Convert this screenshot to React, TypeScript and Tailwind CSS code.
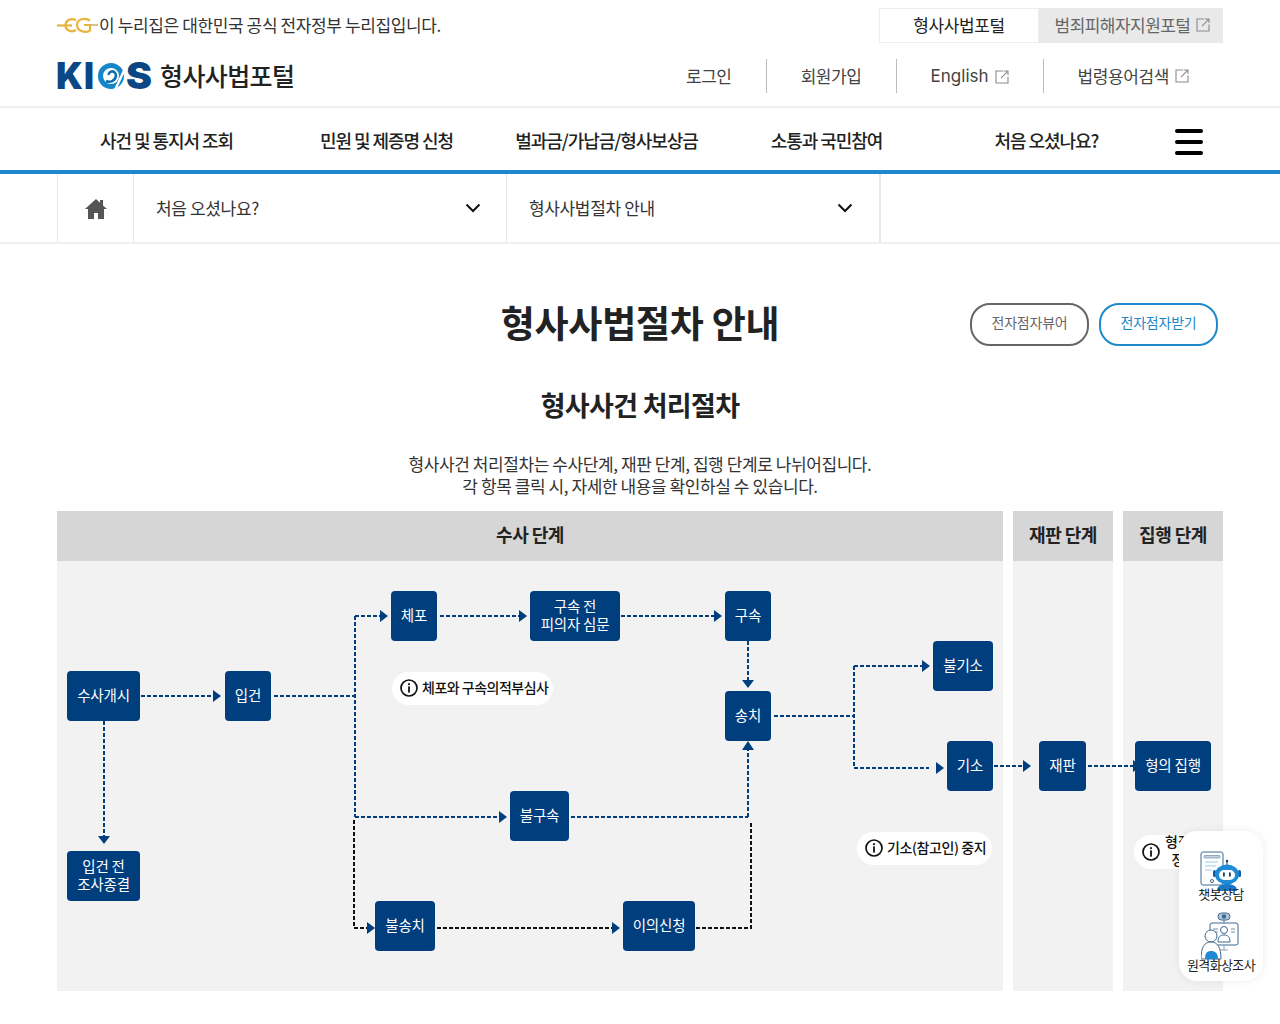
import React from "react";

const font = { fontFamily: '"Noto Sans CJK KR", "Noto Sans", sans-serif' };

function ExtIcon({ className = "" }: { className?: string }) {
  return (
    <svg width="14" height="14" viewBox="0 0 14 14" fill="none" className={className} stroke="#8a8a8a" strokeWidth="1.1">
      <path d="M8 1H1v12h12V6.5" />
      <path d="M6 8.2L12.6 1.4M8.8 1h4.2v4" />
    </svg>
  );
}

function Chevron() {
  return (
    <svg width="16" height="10" viewBox="0 0 16 10" fill="none" stroke="#111" strokeWidth="2">
      <path d="M1.5 1.5L8 8l6.5-6.5" />
    </svg>
  );
}

function InfoIcon({ size = 18 }: { size?: number }) {
  return (
    <svg width={size} height={size} viewBox="0 0 18 18" fill="none" className="shrink-0">
      <circle cx="9" cy="9" r="8" stroke="#111" strokeWidth="1.7" />
      <rect x="8.1" y="7.4" width="1.8" height="6.2" fill="#111" />
      <rect x="8.1" y="4.2" width="1.8" height="1.9" fill="#111" />
    </svg>
  );
}

function Logo() {
  return (
    <svg width="96" height="30" viewBox="0 0 96 30" className="shrink-0 overflow-visible">
      <text x="-1" y="28" fontFamily="Inter, sans-serif" fontWeight="900" fontSize="37" fill="#0a4784" textLength="27" lengthAdjust="spacingAndGlyphs">K</text>
      <text x="27" y="28" fontFamily="Inter, sans-serif" fontWeight="900" fontSize="37" fill="#0a4784" textLength="10" lengthAdjust="spacingAndGlyphs">I</text>
      <circle cx="54" cy="15" r="10.500" fill="none" stroke="#1487c9" strokeWidth="5" />
      <path d="M49 20c4 2 9 0 10-5 0-3-2-5-4.500-4.500-2 .5-3 2-2.500 3.500" fill="none" stroke="#0f6db4" strokeWidth="2.600" />
      <path d="M58 29L71 1" stroke="#fff" strokeWidth="2.500" />
      <text x="69" y="28" fontFamily="Inter, sans-serif" fontWeight="900" fontSize="37" fill="#0a4784" textLength="26" lengthAdjust="spacingAndGlyphs">S</text>
    </svg>
  );
}

function EGov() {
  return (
    <svg width="41" height="16" viewBox="0 0 41 16" fill="none" stroke="#e8b43c" strokeWidth="2.2" className="shrink-0">
      <path d="M0 8.500h15" />
      <path d="M19 3.200C14 .8 9 3 8.500 8s6 8 10.500 5" />
      <path d="M33 3.500C28 .2 20 2 20 8s8 8.500 13 5.500V8h-6" />
      <path d="M33 8h8" strokeWidth="1.400" stroke="#c9a862" />
    </svg>
  );
}

function RobotIcon() {
  return (
    <svg width="42" height="40" viewBox="0 0 42 40" fill="none">
      <rect x="1" y="1" width="22" height="33" rx="2" fill="#fff" stroke="#3d6a92" strokeWidth="1" />
      <rect x="4" y="4.500" width="16" height="2.500" rx="1" fill="#c3d3e0" stroke="#3d6a92" strokeWidth=".5" />
      <path d="M5 11h13M5 15h11M5 19h7" stroke="#8fd0e4" strokeWidth="1.200" />
      <circle cx="12" cy="30" r="1.500" stroke="#3d6a92" />
      <circle cx="27" cy="10" r="1.200" fill="#0d3f73" />
      <path d="M27 11v5" stroke="#0d3f73" />
      <path d="M17 40c0-5 4-7 10-7s10 2 10 7z" fill="#1878c4" />
      <rect x="13" y="19" width="3" height="7" rx="1.500" fill="#0d5fa5" />
      <rect x="38" y="19" width="3" height="7" rx="1.500" fill="#0d5fa5" />
      <ellipse cx="27" cy="23.500" rx="12" ry="10" fill="#1f8ad6" />
      <rect x="19" y="19" width="16" height="10" rx="5" fill="#fff" />
      <rect x="23" y="21.500" width="1.800" height="4" fill="#0d3f73" />
      <rect x="29" y="21.500" width="1.800" height="4" fill="#0d3f73" />
    </svg>
  );
}

function VideoIcon() {
  return (
    <svg width="40" height="48" viewBox="0 0 40 48" fill="none">
      <rect x="17" y="1" width="12" height="7" rx="3.500" fill="#b8c8d6" stroke="#3d6a92" />
      <circle cx="23" cy="4.500" r="2.200" fill="#3d6a92" />
      <path d="M23 8v3" stroke="#3d6a92" />
      <rect x="9" y="11" width="28" height="22" rx="2" fill="#fff" stroke="#3d6a92" />
      <circle cx="23" cy="18" r="3.500" fill="#fff" stroke="#3d6a92" />
      <path d="M17 30c0-5 2-7 6-7s6 2 6 7z" fill="#fff" stroke="#3d6a92" />
      <path d="M12 17h5M12 20h5M30 17h4M30 20h4" stroke="#6c8ba5" />
      <path d="M23 33v5M19 38h8" stroke="#8aa0b3" />
      <circle cx="10" cy="24" r="6" fill="#fff" stroke="#3d6a92" />
      <path d="M0 47c0-11 3-17 10-17s10 6 10 17z" fill="#fff" stroke="#3d6a92" />
      <path d="M4 47c0-6 2-8 6-8s7 2 7 8z" fill="#1f8ad6" />
    </svg>
  );
}

/* Flow-chart: nodes sit on a free canvas whose origin is the diagram's top-left (57,511 on the page). */
type Node = { t: string[]; x: number; y: number; w: number };
const nodes: Node[] = [
  { t: ["수사개시"], x: 10, y: 160, w: 73 },
  { t: ["입건"], x: 168, y: 160, w: 46 },
  { t: ["체포"], x: 334, y: 80, w: 46 },
  { t: ["구속 전", "피의자 심문"], x: 473, y: 80, w: 90 },
  { t: ["구속"], x: 668, y: 80, w: 46 },
  { t: ["송치"], x: 668, y: 180, w: 46 },
  { t: ["불기소"], x: 876, y: 130, w: 60 },
  { t: ["기소"], x: 890, y: 230, w: 46 },
  { t: ["재판"], x: 982, y: 230, w: 47 },
  { t: ["형의 집행"], x: 1078, y: 230, w: 76 },
  { t: ["입건 전", "조사종결"], x: 10, y: 340, w: 73 },
  { t: ["불구속"], x: 453, y: 280, w: 59 },
  { t: ["불송치"], x: 318, y: 390, w: 60 },
  { t: ["이의신청"], x: 566, y: 390, w: 72 },
];

const blue = "#003e7e";

function Connectors() {
  const ox = 57;
  const oy = 511;
  const blueLines = [
    "M141 696H214",
    "M274 696H355",
    "M355 616V817",
    "M355 616H381",
    "M440 616H520",
    "M621 616H715",
    "M748 641V681",
    "M774 716H854",
    "M854 666V768",
    "M854 666H923",
    "M854 768H929",
    "M994 766H1024",
    "M1088 766H1136",
    "M104 721V836",
    "M355 817H499",
    "M571 817H748",
    "M748 817V749",
  ];
  const blackLines = ["M354 820V928H367", "M437 928H613", "M696 928H751V823"];
  const right = [
    [221, 696], [388, 616], [527, 616], [722, 616], [930, 666], [944, 768], [1031, 766], [1141, 766], [507, 817], [375, 928], [620, 928],
  ];
  const down = [[748, 688], [104, 844]];
  const up = [[748, 741]];
  return (
    <svg width="1166" height="480" viewBox={`${ox} ${oy} 1166 480`} fill="none" className="absolute left-0 top-0">
      {blueLines.map((d) => (
        <path key={d} d={d} stroke={blue} strokeWidth="2" strokeDasharray="4 2" />
      ))}
      {blackLines.map((d) => (
        <path key={d} d={d} stroke="#111" strokeWidth="2" strokeDasharray="4 2" />
      ))}
      {right.map(([x, y]) => (
        <path key={`${x}${y}`} d={`M${x} ${y}l-8-6v12z`} fill={blue} />
      ))}
      {down.map(([x, y]) => (
        <path key={`${x}${y}`} d={`M${x} ${y}l-6-8h12z`} fill={blue} />
      ))}
      {up.map(([x, y]) => (
        <path key={`${x}${y}`} d={`M${x} ${y}l-6 9h12z`} fill={blue} />
      ))}
    </svg>
  );
}

function Panel({ title, className }: { title: string; className: string }) {
  return (
    <div className={`flex flex-col bg-[#f2f2f2] ${className}`}>
      <div className="flex h-[50px] items-center justify-center bg-[#d6d6d6] pb-[3px] text-[18px] font-bold tracking-[-0.5px] text-[#222]">{title}</div>
    </div>
  );
}

export default function App() {
  return (
    <div className="relative h-[1024px] w-[1280px] overflow-hidden bg-white text-[#222]" style={font}>
      {/* top bar */}
      <div className="mx-auto flex h-[52px] w-[1166px] items-start justify-between pt-2">
        <div className="flex h-[35px] items-center gap-[1px] pb-[2px] text-[17px] tracking-[-0.38px] text-[#333]">
          <EGov />
          <span>이 누리집은 대한민국 공식 전자정부 누리집입니다.</span>
        </div>
        <div className="flex h-[35px] text-[17px] tracking-[-0.4px]">
          <div className="flex w-[160px] items-center justify-center border border-[#eeeeee] bg-white pb-[2px] text-[#222]">형사사법포털</div>
          <div className="flex w-[184px] items-center justify-center gap-[6px] bg-[#e9e9e9] pb-[2px] pl-[3px] tracking-[-0.55px] text-[#666]">
            범죄피해자지원포털
            <ExtIcon />
          </div>
        </div>
      </div>

      {/* logo row */}
      <div className="mx-auto flex h-[54px] w-[1166px] items-center justify-between">
        <div className="flex items-center gap-[7px] pb-[7px]">
          <Logo />
          <span className="text-[25px] font-medium tracking-[-0.6px] text-[#222]">형사사법포털</span>
        </div>
        <div className="mb-[6px] flex h-[34px] items-center text-[17px] tracking-[-0.4px] text-[#444]">
          <span className="flex h-full items-center border-r border-[#bbbbbb] pr-[34px]">로그인</span>
          <span className="flex h-full items-center border-r border-[#bbbbbb] px-[34px]">회원가입</span>
          <span className="flex h-full items-center gap-[6px] border-r border-[#bbbbbb] px-[34px] pt-[1px] tracking-[0]" style={{ fontFamily: 'Inter, "Noto Sans", sans-serif' }}>
            English
            <ExtIcon />
          </span>
          <span className="flex h-full items-center gap-[6px] pl-[34px] pr-[34px]">
            법령용어검색
            <ExtIcon />
          </span>
        </div>
      </div>

      {/* main nav */}
      <div className="h-[68px] border-t-2 border-b-4 border-t-[#f0f0f0] border-b-[#1e88cf]">
        <div className="mx-auto flex h-full w-[1166px] items-center">
          {["사건 및 통지서 조회", "민원 및 제증명 신청", "벌과금/가납금/형사보상금", "소통과 국민참여", "처음 오셨나요?"].map((t) => (
            <div key={t} className="flex w-[220px] justify-center pt-[2px] pr-[1px] text-[18px] font-medium tracking-[-1.05px] text-[#222]">
              {t}
            </div>
          ))}
          <div className="ml-[18px] flex w-[28px] flex-col gap-[7px] pt-[5px]">
            <span className="h-[4px] rounded-full bg-black" />
            <span className="h-[4px] rounded-full bg-black" />
            <span className="h-[4px] rounded-full bg-black" />
          </div>
        </div>
      </div>

      {/* breadcrumb */}
      <div className="h-[70px] border-b-2 border-[#f0f0f0]">
        <div className="mx-auto flex h-full w-[1166px]">
          <div className="flex w-[77px] items-center justify-center border-x border-[#e6e6e6] pt-[2px]">
            <svg width="22" height="20" viewBox="0 0 22 20" fill="#555">
              <path d="M11 0L0 10h3v10h6v-6h4v6h6V10h3l-4-3.600V1h-3v2.700z" />
            </svg>
          </div>
          <div className="flex w-[373px] items-center justify-between border-r border-[#e6e6e6] pl-[22px] pr-[25px] text-[17px] tracking-[-0.35px] text-[#333]">
            처음 오셨나요?
            <Chevron />
          </div>
          <div className="flex w-[374px] items-center justify-between border-r-2 border-[#e6e6e6] pl-[22px] pr-[26px] text-[17px] tracking-[-0.35px] text-[#333]">
            형사사법절차 안내
            <Chevron />
          </div>
        </div>
      </div>

      {/* title */}
      <div className="mx-auto mt-[56px] grid h-[44px] w-[1166px] grid-cols-[1fr_auto_1fr] items-center">
        <div />
        <h1 className="mb-[4px] text-[37px] font-bold leading-[44px] tracking-[-0.25px] text-[#222]">형사사법절차 안내</h1>
        <div className="flex justify-end gap-[10px] pr-[5px] text-[14px] tracking-[-0.2px]">
          <span className="flex h-[43px] w-[119px] items-center justify-center rounded-[20px] border-2 border-[#666666] pb-[3px] text-[#666]">전자점자뷰어</span>
          <span className="flex h-[43px] w-[119px] items-center justify-center rounded-[20px] border-2 border-[#1e88c8] pb-[3px] text-[#1e88c8]">전자점자받기</span>
        </div>
      </div>

      <h2 className="mt-[43px] text-center text-[27px] font-bold leading-[36px] tracking-[-0.7px] text-[#222]">형사사건 처리절차</h2>
      <p className="mt-[30px] text-center text-[17px] leading-[22px] tracking-[-0.42px] text-[#333]">
        형사사건 처리절차는 수사단계, 재판 단계, 집행 단계로 나뉘어집니다.
        <br />각 항목 클릭 시, 자세한 내용을 확인하실 수 있습니다.
      </p>

      {/* diagram */}
      <div className="relative mx-auto mt-[14px] flex h-[480px] w-[1166px] gap-[10px]">
        <Panel title="수사 단계" className="w-[946px]" />
        <Panel title="재판 단계" className="w-[100px]" />
        <Panel title="집행 단계" className="w-[100px]" />

        <Connectors />

        {nodes.map((n) => (
          <div
            key={n.t.join()}
            className="absolute flex h-[50px] flex-col items-center justify-center rounded-[4px] bg-[#003e7e] pb-[2px] text-[14.5px] leading-[18px] tracking-[-0.2px] text-white"
            style={{ left: n.x, top: n.y, width: n.w }}
          >
            {n.t.map((l) => (
              <span key={l}>{l}</span>
            ))}
          </div>
        ))}

        <div className="absolute left-[335px] top-[161px] flex h-[33px] w-[161px] items-center gap-[4px] rounded-[17px] bg-white pb-[1px] pl-[8px] text-[14px] font-medium tracking-[-0.5px] text-[#111]">
          <InfoIcon />
          <span className="-mt-[2px]">체포와 구속의적부심사</span>
        </div>
        <div className="absolute left-[800px] top-[321px] flex h-[33px] w-[135px] items-center gap-[4px] rounded-[17px] bg-white pb-[1px] pl-[8px] text-[14px] font-medium tracking-[-0.4px] text-[#111]">
          <InfoIcon />
          <span className="-mt-[2px]">기소(참고인) 중지</span>
        </div>
        <div className="absolute left-[1077px] top-[324px] flex h-[34px] w-[78px] items-center gap-[5px] rounded-[17px] bg-white pl-[8px] text-[14px] font-medium leading-[18px] text-[#111]">
          <InfoIcon />
          <span className="-mt-[4px] text-center">
            형집행
            <br />
            정지
          </span>
        </div>
      </div>

      {/* floating quick menu */}
      <div className="absolute left-[1179px] top-[831px] flex h-[150px] w-[84px] flex-col items-center rounded-[18px] bg-white pt-[20px] text-[13px] leading-[16px] tracking-[-0.6px] text-[#222] shadow-[0_0_8px_rgba(0,0,0,0.08)]">
        <RobotIcon />
        <span className="-mt-[5px]">챗봇상담</span>
        <div className="mt-[10px]">
          <VideoIcon />
        </div>
        <span className="-mt-[3px]">원격화상조사</span>
      </div>
    </div>
  );
}
